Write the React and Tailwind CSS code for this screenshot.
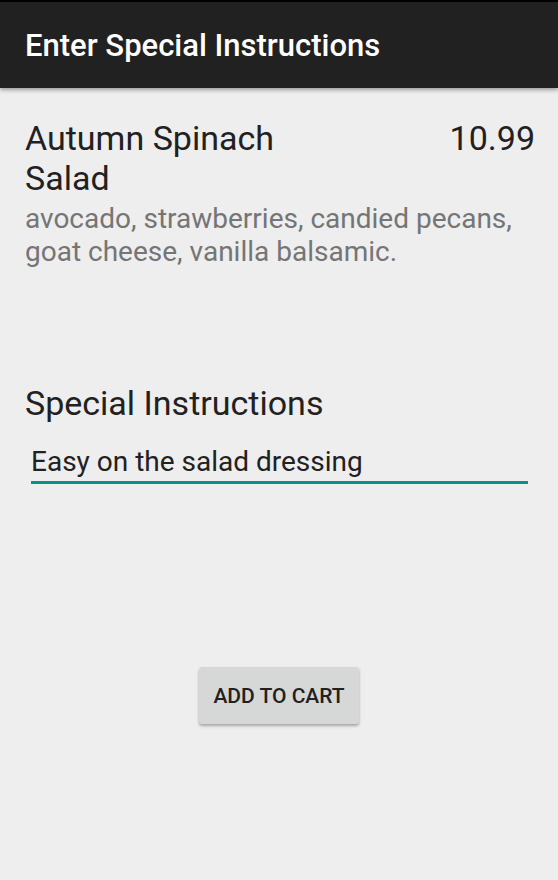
export default function App() {
  return (
    <div className="w-[558px] h-[880px] bg-[#eeeeee] flex flex-col" style={{ fontFamily: 'Roboto, "Liberation Sans", sans-serif' }}>
      {/* app bar */}
      <div className="h-[88px] bg-[#212121] border-t-2 border-black flex items-center px-[25px] shadow-[0_2px_4px_rgba(0,0,0,0.35)] z-10">
        <span className="text-white text-[31px] font-medium leading-none">Enter Special Instructions</span>
      </div>

      <div className="pl-[25px] pr-[23px] pt-[30px]">
        <div className="flex justify-between items-start">
          <div className="text-[#212121] text-[34px] leading-[40px] w-[270px]">Autumn Spinach Salad</div>
          <div className="text-[#212121] text-[34px] leading-[40px]">10.99</div>
        </div>
        <div className="text-[#757575] text-[28px] leading-[33px] mt-[4px]">
          avocado, strawberries, candied pecans, goat cheese, vanilla balsamic.
        </div>

        <div className="text-[#212121] text-[34px] leading-[40px] mt-[115px]">Special Instructions</div>
        <div className="ml-[6px] mr-[7px] mt-[22px] border-b-[3px] border-[#009688] pb-[2px]">
          <span className="text-[#212121] text-[28px] leading-[34px]">Easy on the salad dressing</span>
        </div>
      </div>

      <div className="flex justify-center mt-[183px]">
        <button className="w-[160px] h-[57px] pt-[3px] bg-[#d6d7d7] rounded-[3px] shadow-[0_2px_3px_rgba(0,0,0,0.3)] text-[#212121] text-[21px] font-medium">
          ADD TO CART
        </button>
      </div>
    </div>
  );
}
